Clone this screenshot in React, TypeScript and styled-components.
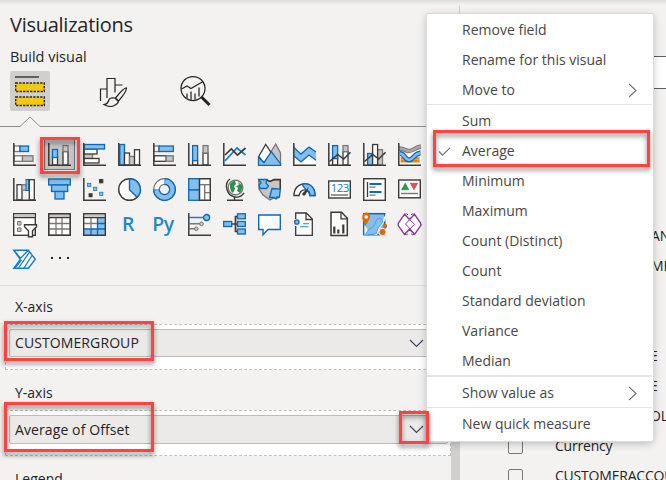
import React from 'react';
import styled, { createGlobalStyle } from 'styled-components';

const Global = createGlobalStyle`
  * { box-sizing: border-box; }
  body {
    margin: 0;
    background: #f3f2f1;
    color: #252423;
    font: 14px/20px "Open Sans", "Noto Sans", sans-serif;
    overflow: hidden;
  }
`;

const Page = styled.div`
  position: relative;
  display: flex;
  width: 666px;
  height: 480px;
  overflow: hidden;
  background: #f3f2f1;
`;

const TopShade = styled.div`
  position: absolute;
  inset: 0 0 auto;
  height: 5px;
  background: linear-gradient(#dddcdb, #f3f2f1);
`;

const VisualPane = styled.section`
  display: flex;
  flex-direction: column;
  flex: 0 0 451px;
  padding-top: 11px;

  > * { flex-shrink: 0; }
`;

const ScrollTrack = styled.div`
  flex: 0 0 8px;
  margin-top: 127px;
  background: #d2d0ce;
`;

const Title = styled.h1`
  margin: 0 0 0 10px;
  font-size: 20px;
  font-weight: 400;
  line-height: 27px;
  letter-spacing: -0.26px;
`;

const Subtitle = styled.h2`
  margin: 9px 0 0 10px;
  font-size: 14.5px;
  font-weight: 400;
  line-height: 20px;
`;

const Modes = styled.nav`
  display: flex;
  gap: 43px;
  height: 40px;
  margin: 4px 0 0 10px;
`;

const Mode = styled.button<{ $active?: boolean }>`
  display: grid;
  place-items: center;
  width: 40px;
  height: 40px;
  padding: 0;
  border: 0;
  border-radius: 2px;
  background: ${(p) => (p.$active ? '#d0cfcd' : 'transparent')};
`;

const Notch = styled.svg`
  display: block;
  width: 451px;
  height: 12px;
  margin-top: 5px;
`;

const Gallery = styled.div`
  display: grid;
  grid-template-columns: repeat(12, 35px);
  grid-template-rows: repeat(4, 35px);
  height: 148px;
  margin: 9px 0 0 7px;
`;

const VisualTile = styled.div<{ $selected?: boolean }>`
  display: grid;
  place-items: center;
  width: ${(p) => (p.$selected ? 31 : 35)}px;
  height: ${(p) => (p.$selected ? 31 : 35)}px;
  margin: ${(p) => (p.$selected ? '2px' : '0')};
  border: ${(p) => (p.$selected ? '1px solid #797775' : '0')};
  background: ${(p) => (p.$selected ? '#c8c6c4' : 'transparent')};
`;

const CodeMark = styled.span`
  margin: -2px 0 0 -3px;
  color: #2487c4;
  font: 600 19.5px/23px "Open Sans", sans-serif;
  letter-spacing: -0.5px;
`;

const Ellipsis = styled.span`
  display: flex;
  gap: 6px;
  margin: -4px 0 0 1px;
`;
const Dot = styled.i`
  width: 2px;
  height: 2px;
  background: #252423;
`;

const Wells = styled.div`
  border-top: 1px solid #e1dfdd;
  padding-top: 11px;
`;

const WellLabel = styled.div<{ $gap: number }>`
  height: 20px;
  margin: 0 0 ${(p) => p.$gap}px 15px;
`;

const Well = styled.div<{ $after: number }>`
  height: 46px;
  margin: 0 0 ${(p) => p.$after}px 5px;
  padding: 4px 2px 0 3px;
  border: 1px dashed #c3c1bf;
  background: #fff;
`;

const Field = styled.div<{ $height: number }>`
  display: flex;
  align-items: center;
  justify-content: space-between;
  height: ${(p) => p.$height}px;
  padding: 0 23px 0 5px;
  border: 1px solid #bebbb8;
  border-radius: 2px;
  background: #ebeae9;
  letter-spacing: 0.1px;
`;

const DownMark = styled.svg`
  width: 15px;
  height: 9px;
`;

const FieldsPane = styled.section`
  display: flex;
  flex-direction: column;
  flex: 1;
  min-width: 0;
  border-left: 1px solid #d2d0ce;
`;

const Search = styled.div`
  flex: none;
  height: 33px;
  margin: 56px 0 132px 24px;
  border: 1px solid #605e5c;
  border-right: 0;
  background: #fff;
`;

const FieldList = styled.ul`
  margin: 0;
  padding: 0;
  list-style: none;
`;

const FieldRow = styled.li`
  display: flex;
  align-items: center;
  height: 30px;
  padding-left: 48px;
  white-space: nowrap;
`;

const Check = styled.span`
  flex: none;
  width: 15px;
  height: 15px;
  margin-right: 32px;
  border: 1px solid #797775;
  border-radius: 2px;
`;

const Tail = styled.span<{ $lead: number }>`
  padding-left: ${(p) => p.$lead}px;
  letter-spacing: -0.2px;
`;

const Menu = styled.div`
  position: absolute;
  top: 14px;
  left: 427px;
  width: 226px;
  height: 427px;
  padding-top: 1px;
  border-radius: 2px;
  background: #fff;
  box-shadow: 0 0 0 1px #dcdbda, 0 2px 9px rgba(0, 0, 0, 0.26);
  color: #484746;
`;

const MenuItem = styled.div`
  display: grid;
  grid-template-columns: 35px 1fr 12px;
  align-items: center;
  height: 30px;
  padding-right: 13px;
`;

const Separator = styled.div<{ $heavy?: boolean }>`
  height: ${(p) => (p.$heavy ? 2 : 1)}px;
  margin: -1px 1px 1px 0;
  background: #e6e5e4;
`;

const Highlight = styled.div<{ $x: number; $y: number; $w: number; $h: number }>`
  position: absolute;
  left: ${(p) => p.$x}px;
  top: ${(p) => p.$y}px;
  width: ${(p) => p.$w}px;
  height: ${(p) => p.$h}px;
  border: 3px solid #ff4343;
  filter: drop-shadow(0 3px 2.5px rgba(0, 0, 0, 0.5));
`;

const Glyph = styled.svg`
  display: block;
  width: 23px;
  height: 23px;
  overflow: visible;
`;

const D = '#3b3a39';
const B = '#83beec';
const S = '#0f68b2';
const G = '#797775';
const L = '#c8c6c4';
const W = '#fdfdfd';

type BoxProps = { x: number; y: number; w: number; h: number; c?: 'b' | 'w' | 'g' | 'n' };
const fills = { b: B, w: W, g: L, n: W };
const lines = { b: S, w: D, g: G, n: G };
const Bar = ({ x, y, w, h, c = 'w' }: BoxProps) => (
  <rect x={x} y={y} width={w} height={h} fill={fills[c]} stroke={lines[c]} strokeWidth="1.3" />
);
const Axis = () => <path d="M.8 0V22.2H23" fill="none" stroke={D} strokeWidth="1.5" />;
const Line = ({ d, c = D, w = 1.3, f = 'none' }: { d: string; c?: string; w?: number; f?: string }) => (
  <path d={d} fill={f} stroke={c} strokeWidth={w} />
);

const visuals: React.ReactNode[] = [
  // row 1
  <><Bar x={1} y={3} w={6} h={5.5} c="n" /><Bar x={7} y={3} w={8.5} h={5.5} c="b" /><Bar x={1} y={12.8} w={8.5} h={5.5} c="n" /><Bar x={9.5} y={12.8} w={10.5} h={5.5} c="g" /><Axis /></>,
  <><Bar x={4.5} y={14} w={5} h={8} /><Bar x={4.5} y={6.5} w={5} h={8} c="b" /><Bar x={15} y={8.5} w={5} h={13.5} c="w" /><Bar x={15} y={2.6} w={5} h={6} c="g" /><Axis /></>,
  <><Bar x={1} y={10.5} w={8.5} h={5} c="g" /><Bar x={1} y={6} w={13} h={5} /><Bar x={1} y={1.5} w={20.5} h={4.5} c="b" /><Bar x={1} y={15.5} w={15} h={4.5} /><Axis /></>,
  <><Bar x={1.8} y={1.5} w={4.7} h={20.5} c="b" /><Bar x={6.5} y={10} w={5} h={12} /><Bar x={11.5} y={13.5} w={5} h={8.5} c="g" /><Bar x={16.5} y={6.7} w={5} h={15.3} /><Axis /></>,
  <><Bar x={1} y={3} w={5} h={5.5} c="n" /><Bar x={6} y={3} w={14.3} h={5.5} c="b" /><Bar x={1} y={12.8} w={12.2} h={5.5} c="w" /><Bar x={13.2} y={12.8} w={7} h={5.5} c="g" /><Axis /></>,
  <><Bar x={4.6} y={17.5} w={5} h={4.5} /><Bar x={4.6} y={2.6} w={5} h={15} c="b" /><Bar x={15} y={10} w={5} h={12} /><Bar x={15} y={2.6} w={5} h={7.4} c="g" /><Axis /></>,
  <><Axis /><Line d="M2 17.8 14 5l8.5 7" c="#1683ca" w={1.7} /><Line d="M2 12 8.3 5.9l6.2 6.2L22.5 5" w={1.7} /></>,
  <><Line d="m11.5 11 6.2-10L22.5 10v12H12Z" c={G} f={L} /><Line d="m.7 13.5 7-12 6 9L6 20Z" f={W} /><Line d="m.5 14.2 5.5 5.5 7.3-11 9.2 12v1.7H.5Z" c={S} f={B} /></>,
  <><path d="M1 14l7 6 8-8 7 6v4H1Z" fill="#fff" /><path d="M1 4.5 8 11l8-7 7 4.5V17l-7-5-8 7-7-6Z" fill={B} /><Line d="m1 4.5 7 6.6 8-7L23 9M1 13l7 6 8-7 7 5.2" c={S} /><Axis /></>,
  <><Bar x={4.6} y={14} w={5} h={8} /><Bar x={4.6} y={2.6} w={5} h={13} c="b" /><Bar x={15} y={8.5} w={5} h={13.5} /><Bar x={15} y={2.6} w={5} h={6} c="g" /><Axis /><Line d="m1.5 18.5 8.2-7 6 4.5L22.5 9.3" w={1.5} /></>,
  <><Bar x={4.6} y={10.5} w={5} h={11.5} c="b" /><Bar x={14.5} y={6.7} w={5} h={15.3} c="g" /><Bar x={9.6} y={1.5} w={5} h={20.5} /><Axis /><Line d="m1.5 18.5 8.2-7 6 4.5L22.5 9.3" w={1.5} /></>,
  <><path d="M1 6v16h22V8Z" fill="#fff" /><path d="M2.5 15.5h19M2.5 18.2h19" stroke="#e58115" strokeWidth="2.6" /><Line d="M2 10.5c5 0 4.5 6.5 9 6.5s4.5-6.5 11.5-7" c={S} w={4.8} /><Line d="M1.5 10.5c5.5 0 5 6.5 9.5 6.5s4.5-6.5 12-7" c={B} w={2.5} /><Line d="M1 5.5c6 0 6 2.5 10 2.5s6-3.5 12-4.5" c={G} w={4.5} /><Line d="M1 5.5c6 0 6 2.5 10 2.5s6-3.5 12-4.5" c="#aaa8a6" w={2.5} /><Axis /></>,
  // row 2
  <><Bar x={4} y={6.7} w={5} h={15.3} /><Bar x={9} y={6.7} w={4.5} h={5.5} c="g" /><rect x="13" y="1.5" width="2.7" height="11" fill={B} stroke={S} /><Bar x={16.3} y={1.7} w={5} h={20.3} /><Axis /></>,
  <><Bar x={.7} y={1} w={21.6} h={6} c="b" /><Bar x={3.5} y={7} w={16.2} h={6.5} c="b" /><Bar x={7} y={13.5} w={9} h={7.5} c="b" /></>,
  <><Axis /><rect x="4.6" y="5.3" width="3.2" height="3.2" fill={B} stroke={S} strokeWidth=".7" /><rect x="16" y="1" width="4.3" height="4.3" fill={D} /><rect x="10.6" y="9.2" width="3.2" height="3.2" fill={B} stroke={S} strokeWidth=".7" /><rect x="5.6" y="15.2" width="4" height="4" fill={D} /><rect x="16.7" y="14.2" width="3.2" height="3.2" fill={B} stroke={S} strokeWidth=".7" /></>,
  <><circle cx="11.5" cy="11.5" r="10.8" fill={W} stroke={D} strokeWidth="1.4" /><Line d="M11.5.7v11l7.6 7.5A10.8 10.8 0 0 0 11.5.7Z" c={S} f={B} w={1.4} /></>,
  <><circle cx="11.5" cy="11.5" r="8" fill="none" stroke={G} strokeWidth="6.8" /><circle cx="11.5" cy="11.5" r="8" fill="none" stroke={W} strokeWidth="4.4" /><path d="M11.5 3.5a8 8 0 1 1-8 8" fill="none" stroke={S} strokeWidth="6.9" /><path d="M12.2 3.5a8 8 0 1 1-8.7 8.7" fill="none" stroke={B} strokeWidth="4.4" /></>,
  <><Bar x={.7} y={.7} w={10.8} h={11.3} c="b" /><Bar x={.7} y={12} w={10.8} h={10.3} c="b" /><Bar x={11.5} y={.7} w={10.8} h={6} c="n" /><Bar x={11.5} y={6.7} w={5.2} h={15.6} c="n" /><Bar x={16.7} y={6.7} w={5.6} h={8} c="n" /><Bar x={16.7} y={14.7} w={5.6} h={7.6} c="n" /><rect x="11.5" y=".7" width="10.8" height="21.6" fill="none" stroke={D} strokeWidth="1.3" /></>,
  <><circle cx="12.5" cy="9.5" r="7.3" fill="#fff" stroke={G} strokeWidth="1.4" /><path d="M7 7c0-2 3-4 5-4l1 3-2 2 1 3-2 4c-2-1-3-3-3-8Zm8-3 4 3v4l-2 4-3-2 1-3-2-2 3-1Z" fill="#299447" /><Line d="M7 1C1 5 3 17 11 18.8c4 1 8-1 10-4M11.5 19v3M4 22.2h16" w={1.4} /></>,
  <><Line d="M.7 2H8l4 1.5L16 2h6.3v9L20 20h-4l-4 2-7-5-4-6Z" c={G} f={L} /><Line d="M.7 1.5H9L8 5l2.5 3-2 2.5H2L1 7l2-2Z" c={S} f={B} /><Line d="m14 10.5 8.3.5-.8 8H19l-1 2-2-1.5h-4.5l1-3.5Z" c={S} f={B} /><Line d="m9 2 3 1.5 4-2h6.3V11" w={1.4} /></>,
  <><path d="M1 17.5C1 2 22 2 22 17.5h-5C15 10 8 10 6 17.5Z" fill={W} stroke={D} strokeWidth="1.4" /><path d="M9 6.4C16 4 22 9 22 17.5h-5c0-3-2-5-4-5.5Z" fill={B} stroke={S} strokeWidth="1.3" /><path d="m16 9-6.5 6.2q-1 2 1.2 2.4c2.6 0 3-4 5.3-8.6Z" fill={D} /></>,
  <><rect x=".7" y="3" width="21.6" height="17" fill={W} stroke={D} strokeWidth="1.4" /><text x="2.7" y="14" fontFamily="Open Sans" fontSize="11.5" letterSpacing="-.6" fill="#187fc2">123</text><Line d="M3 17h17" c={G} w={1.5} /></>,
  <><rect x=".7" y=".7" width="21.6" height="21.6" fill={W} stroke={D} strokeWidth="1.4" /><Line d="M4.5 4v15" /><path d="M6.5 6h12m-12 8h12" stroke={S} strokeWidth="2" /><path d="M6.5 9.2h6m-6 8h6" stroke={G} strokeWidth="1.2" /></>,
  <><rect x=".7" y="2" width="21.6" height="17.8" fill={W} stroke={D} strokeWidth="1.4" /><path d="m3.5 11.8 3.7-6.5 3.6 6.5Z" fill="#2c9b4f" stroke="#217c3d" strokeWidth=".6" /><path d="M12.4 5.3h7.2L16 11.8Z" fill="#ed4857" stroke="#bd3040" strokeWidth=".6" /><Line d="M3 15.5h17" c={G} w={1.4} /></>,
  // row 3
  <><rect x=".7" y=".7" width="21.6" height="21.6" fill={W} stroke={D} strokeWidth="1.4" /><path d="M1.4 2.6h20.2" stroke={L} strokeWidth="2.5" /><Line d="M1 4.6h21" /><path d="M4.5 8.5h3.5V12H4.5Zm0 6.5h3.5v3.5H4.5Z" fill={L} stroke={G} /><Line d="M11.5 11.7h12v2l-4 4v6h-4v-6l-4-4Z" f={W} w={1.4} /></>,
  <><rect x=".7" y=".7" width="21.6" height="21.6" fill={W} stroke={D} strokeWidth="1.4" /><path d="M1.5 2.9h20" stroke={L} strokeWidth="2" /><Line d="M1 4.6h21" /><Line d="M8 5v17m6-17v17M1 10.5h21M1 16h21" c={G} /><rect x=".7" y=".7" width="21.6" height="21.6" fill="none" stroke={D} strokeWidth="1.4" /></>,
  <><rect x=".7" y=".7" width="21.6" height="21.6" fill={W} /><path d="M1.5 2.9h20" stroke={L} strokeWidth="2" /><path d="M14.5 5H22v17H1v-6h13.5Z" fill={B} /><Line d="M8 5v11M1 10.5h13.5" c={G} /><Line d="M14.5 5v17M8 16v6M1 16h21m-7.5-5.5H22" c={S} /><Line d="M1 4.6h21M.7.7h21.6v21.6H.7Z" w={1.4} /></>,
  'R',
  'Py',
  <><Axis /><path d="M1 4.5h15" stroke="#1683ca" strokeWidth="1.5" /><circle cx="18.6" cy="4.5" r="3" fill={B} stroke={S} strokeWidth="1.3" /><Line d="M1 10.8h11M1 15.8h6" c={G} w={1.5} /><circle cx="13.5" cy="10.8" r="1.8" fill={L} stroke={G} /><circle cx="8.3" cy="15.8" r="1.8" fill={L} stroke={G} /></>,
  <><Line d="M8 11h6M18 3.5h-5.5v15H18" w={1.7} /><Bar x={.7} y={8.5} w={8} h={5} c="b" /><Bar x={14.5} y={.8} w={7.8} h={5} c="b" /><Bar x={14.5} y={8.5} w={7.8} h={5} c="b" /><Bar x={14.5} y={16} w={7.8} h={5} c="b" /></>,
  <Line d="M.7 2h21.6v14.5H10L5 21.7v-5.2H.7Z" c={S} f={W} w={1.4} />,
  <><Line d="M2.7 0h10.6l6 6v16.3H2.7Z" f={W} /><Line d="M13 0v6.5h6.3" /><rect x="1" y="6" width="5" height="7" fill={W} /><circle cx="3.8" cy="9" r="2.2" fill={B} stroke={S} strokeWidth="1.3" /><path d="M10 10.8h6M7 13.8h8.5" stroke="#2487c4" strokeWidth="1.1" /></>,
  <><Line d="M3-.7h10.5l5.8 6v17.2H3Z" f={W} w={1.5} /><Line d="M13-.5v6.3h6.3" /><path d="M6.3 13.5v7m4-4v4m5-9v9" stroke={D} strokeWidth="2.2" /></>,
  <><rect x=".7" y=".7" width="21" height="21" fill={B} stroke={S} strokeWidth="1.5" /><path d="M1.5 12 5 17v5h6l2-7 6-5 2-6 2-3v5L16 17l-2 5H1.5Z" fill={W} opacity=".9" /><path d="M2.5 22 5 17l6-4 3-7 4-1 2 4-5 6-2 6Z" fill={B} stroke="#4c9cd8" strokeWidth=".8" /><path d="M2.8 13C0 8 -1 6-.7 3.5-.4-2 7-2 7 3.5 7 7 4 9 2.8 13Z" fill="#da6b05" /><circle cx="3.2" cy="4" r="1.8" fill={W} /><circle cx="19.5" cy="19" r="3.7" fill="#da6b05" stroke={W} /><circle cx="22" cy="13" r="2.2" fill="#da6b05" /></>,
  <g transform="translate(0 .5)"><Line d="M6.5.8 11.5 6l5-5.2 6 8.5q1 1.7 0 3l-6 8.5-5-5.2-5 5.2-6-8.5q-.8-1.5 0-3Z" c="#8b3b99" f={W} w={1.4} /><Line d="m8 2.5 8.500 8.300-8 8.400M15 2.500 7.500 10.5l8 8.500M6.5.8q2-1.2 3.5.5M16.5.8Q15-.4 13 1.3M6.5 20.8q2 1.2 3.5-.5M16.5 20.8q-2 1.2-3.5-.5" c="#8b3b99" w={1} /></g>,
  // row 4
  <g transform="translate(0 1.5)"><Line d="M.8.8h14.5l7 9-7 9H.8l6.5-9Z" c="#137bd0" f="#fff" w={1.4} /><Line d="M1 .8 7.5 8.7 15.5.8M8.5 10.5 2.2 18.3M11 18.5 19 6M5.5 18.5 16.8 2.2" c="#137bd0" w={1.3} /></g>,
];

const Chevron = () => (
  <DownMark viewBox="0 0 15 9">
    <path d="m1 1 6.5 6.5L14 1" fill="none" stroke="#36445c" strokeWidth="1.1" />
  </DownMark>
);

const ForwardMark = () => (
  <svg width="9" height="15" viewBox="0 0 9 15">
    <path d="m1 .8 7 6.7-7 6.7" fill="none" stroke="#6b6968" strokeWidth="1.1" />
  </svg>
);

const CheckMark = styled.svg`
  width: 13px;
  height: 9px;
  margin-left: 11px;
`;

const Item = ({ label, checked, more }: { label: string; checked?: boolean; more?: boolean }) => (
  <MenuItem>
    {checked ? (
      <CheckMark viewBox="0 0 13 9">
        <path d="m1 4.5 3.5 3.7L12 .8" fill="none" stroke="#706e6c" strokeWidth="1.1" />
      </CheckMark>
    ) : <span />}
    <span>{label}</span>
    {more && <ForwardMark />}
  </MenuItem>
);

const aggregations = ['Sum', 'Average', 'Minimum', 'Maximum', 'Count (Distinct)', 'Count', 'Standard deviation', 'Variance', 'Median'];

const listed: { text: string; lead: number; box?: boolean }[] = [
  { text: 'AN', lead: 143 },
  { text: 'ME', lead: 143 },
  { text: '', lead: 0 },
  { text: '', lead: 0 },
  { text: 'E', lead: 142 },
  { text: 'E', lead: 142 },
  { text: 'OL', lead: 142 },
  { text: 'Currency', lead: 0, box: true },
  { text: 'CUSTOMERACCOUNT', lead: 0, box: true },
];

export default function App() {
  return (
    <>
      <Global />
      <Page>
        <VisualPane>
          <Title>Visualizations</Title>
          <Subtitle>Build visual</Subtitle>
          <Modes>
            <Mode $active>
              <svg width="30" height="32" viewBox="0 0 30 32">
                <path d="M0 2h24" stroke="#252423" strokeWidth="1.3" />
                <path d="M.7 8h28.6v8.5H.7Zm0 14h28.6v8.5H.7Z" fill="#f2c811" stroke="#252423" strokeWidth="1.4" strokeDasharray="2.3 1.2" />
              </svg>
            </Mode>
            <Mode>
              <svg width="30" height="32" viewBox="0 0 30 32">
                <g fill="none" stroke="#252423" strokeWidth="1.2">
                  <path d="M2.5 26V14H9m0 9V3.5h8v14M17 10h7.5" />
                  <path d="M28.5 13q-2-1-11 10l3 3q8-9 8-13ZM17 23q-6-1-6.5 3-1 3-4.5 3.5 7 4 12 0 3-2 2-3.5Z" fill="#f3f2f1" />
                </g>
              </svg>
            </Mode>
            <Mode>
              <svg width="32" height="32" viewBox="0 0 32 32">
                <g fill="none" stroke="#252423" strokeWidth="1.25">
                  <circle cx="13" cy="13.5" r="12" />
                  <path d="m1.5 14 5.500-3 4 2.500 12-7M7 23.500v-5m4 6v-8m4 8v-6m4 3v-9" />
                  <path d="m21.500 22 8 8" strokeWidth="3" />
                </g>
              </svg>
            </Mode>
          </Modes>
          <Notch viewBox="0 0 451 12">
            <path d="M0 10.5h20L30 1l10 9.500h411" fill="none" stroke="#8f8d8b" />
          </Notch>
          <Gallery>
            {visuals.map((v, i) => (
              <VisualTile key={i} $selected={i === 1}>
                {typeof v === 'string' ? <CodeMark>{v}</CodeMark> : <Glyph viewBox="0 0 23 23">{v}</Glyph>}
              </VisualTile>
            ))}
            <VisualTile><Ellipsis><Dot /><Dot /><Dot /></Ellipsis></VisualTile>
          </Gallery>
          <Wells>
            <WellLabel $gap={7}>X-axis</WellLabel>
            <Well $after={13}>
              <Field $height={28}>CUSTOMERGROUP<Chevron /></Field>
            </Well>
            <WellLabel $gap={7}>Y-axis</WellLabel>
            <Well $after={13}>
              <Field $height={29}>Average of Offset<Chevron /></Field>
            </Well>
            <WellLabel $gap={7}>Legend</WellLabel>
          </Wells>
        </VisualPane>
        <ScrollTrack />
        <FieldsPane>
          <Search />
          <FieldList>
            {listed.map((f, i) => (
              <FieldRow key={i}>
                {f.box && <Check />}
                <Tail $lead={f.lead}>{f.text}</Tail>
              </FieldRow>
            ))}
          </FieldList>
        </FieldsPane>
        <TopShade />
        <Menu>
          <Item label="Remove field" />
          <Item label="Rename for this visual" />
          <Item label="Move to" more />
          <Separator />
          {aggregations.map((a) => <Item key={a} label={a} checked={a === 'Average'} />)}
          <Separator $heavy />
          <Item label="Show value as" more />
          <Separator />
          <Item label="New quick measure" />
        </Menu>
        <Highlight $x={40} $y={137} $w={40} $h={37} />
        <Highlight $x={4} $y={321} $w={150} $h={40} />
        <Highlight $x={4} $y={402} $w={150} $h={50} />
        <Highlight $x={399} $y={411} $w={30} $h={33} />
        <Highlight $x={433} $y={130} $w={217} $h={37} />
      </Page>
    </>
  );
}
